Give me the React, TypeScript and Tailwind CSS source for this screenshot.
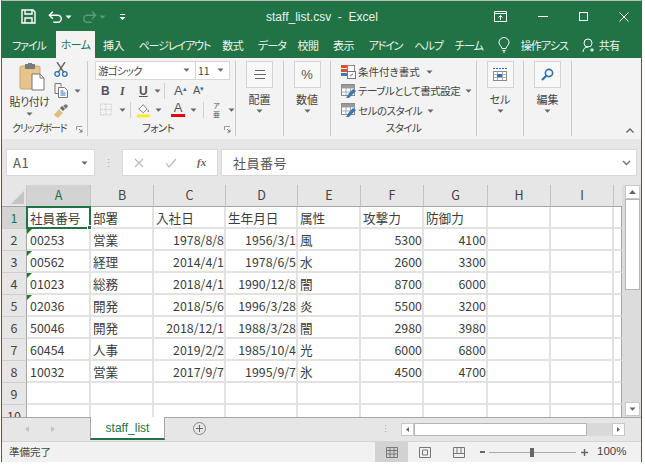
import React from "react";

const Caret = ({ c = "#666" }: { c?: string }) => (
  <svg width="7" height="4" viewBox="0 0 7 4" className="shrink-0"><path d="M0.5 0.5h6L3.5 3.8z" fill={c} /></svg>
);

const PasteIcon = () => (
  <svg width="27" height="28" viewBox="0 0 27 28">
    <rect x="1" y="3" width="20" height="23" rx="1.5" fill="#e6c48c" stroke="#c9a86e" />
    <rect x="6" y="1" width="10" height="5" fill="#7a7a7a" />
    <rect x="9" y="0" width="4" height="2" fill="#7a7a7a" />
    <path d="M13 11h8l4 4v12H13z" fill="#fff" stroke="#777" />
    <path d="M21 11v4h4" fill="none" stroke="#777" />
  </svg>
);
const CutIcon = () => (
  <svg width="14" height="15" viewBox="0 0 14 15" fill="none">
    <path d="M3 0l6.5 10M11 0L4.5 10" stroke="#666" strokeWidth="1.4" />
    <circle cx="3.2" cy="12" r="2.3" stroke="#2a6fb5" strokeWidth="1.3" />
    <circle cx="10.8" cy="12" r="2.3" stroke="#2a6fb5" strokeWidth="1.3" />
  </svg>
);
const CopyIcon = () => (
  <svg width="15" height="15" viewBox="0 0 15 15" fill="none">
    <path d="M1 .5h6v3M1 .5v10h3" stroke="#777" />
    <path d="M4.5 4.5h6l3 3v7h-9z" fill="#fff" stroke="#777" />
    <path d="M6.5 8h3M6.5 10h5M6.5 12h5" stroke="#2a6fb5" />
  </svg>
);
const BrushIcon = () => (
  <svg width="15" height="14" viewBox="0 0 15 14">
    <path d="M0 11l5-6 4 4-5 5z" fill="#e0bd80" />
    <path d="M6 4l2-2 3 3-2 2z" fill="#666" />
    <path d="M9 2l3-2 2 2-2 3z" fill="#777" />
  </svg>
);
const Launcher = () => (
  <svg width="7" height="7" viewBox="0 0 7 7" fill="none">
    <path d="M.5 4V.5H6" stroke="#999" />
    <path d="M3 3l3 3M6 3.5V6H3.5" stroke="#777" />
  </svg>
);
const Vsep = () => <div className="w-px h-[16px] bg-[#cfcfcf] mx-[3px]" />;

const BigGroup = ({ label, icon, w }: { label: string; icon: React.ReactNode; w: string }) => (
  <div className={`${w} shrink-0 flex flex-col items-center border-r border-[#c8c8c8] my-[3px] h-[75px]`}>
    <div className="w-[27px] h-[27px] border border-[#d4d4d4] bg-[#f8f8f8] flex items-center justify-center">{icon}</div>
    <div className="text-[11px] leading-[14px] mt-[4px] text-[#444]">{label}</div>
    <div className="mt-[3px]"><Caret /></div>
  </div>
);

const StyleIcon1 = () => (
  <svg width="15" height="14" viewBox="0 0 15 14">
    <rect x="0" y="0" width="6" height="3" fill="#d9502e" />
    <rect x="0" y="4" width="6" height="3" fill="#d9502e" />
    <rect x="0" y="8" width="6" height="3" fill="#3a7ab8" />
    <rect x="6.5" y=".5" width="7" height="6" fill="#fff" stroke="#888" />
    <rect x="6.5" y="6.5" width="8" height="7" fill="#fff" stroke="#777" />
    <path d="M9 11l3-2" stroke="#666" />
  </svg>
);
const StyleIcon2 = () => (
  <svg width="16" height="15" viewBox="0 0 16 15">
    <rect x=".5" y=".5" width="13" height="11" fill="#fff" stroke="#888" />
    <path d="M.5 4h13M.5 8h13M5 .5v11M9.5 .5v11" stroke="#a9a9a9" />
    <rect x="1" y="1" width="12.5" height="3" fill="#9a9a9a" />
    <path d="M5 14l3-5 4-4 3 2-4 4-3 3z" fill="#3a7ab8" />
  </svg>
);

const CellsIcon = () => (
  <svg width="16" height="15" viewBox="0 0 16 15">
    <path d="M1 1.5h14" stroke="#2a6fb5" strokeDasharray="2 1" />
    <rect x="1.5" y="4.5" width="13" height="9" fill="#fff" stroke="#888" />
    <path d="M1.5 7.5h13M1.5 10.5h13M5.5 4.5v9M10.5 4.5v9" stroke="#aaa" />
    <rect x="5" y="7" width="5" height="3" fill="#2a6fb5" />
  </svg>
);
const SearchIcon = () => (
  <svg width="13" height="13" viewBox="0 0 13 13" fill="none">
    <circle cx="8" cy="5" r="3.6" stroke="#2a6fb5" strokeWidth="1.6" />
    <path d="M5.3 7.7L1 12" stroke="#2a6fb5" strokeWidth="2" />
  </svg>
);

const tabs = [
  { t: "挿入", c: "w-[21px] tracking-[-0.4px]" },
  { t: "ページレイアウト", c: "w-[69px] tracking-[-1.1px]" },
  { t: "数式", c: "w-[21px] tracking-[-0.4px]" },
  { t: "データ", c: "w-[25px] tracking-[-0.8px]" },
  { t: "校閲", c: "w-[21px] tracking-[-0.4px]" },
  { t: "表示", c: "w-[21px] tracking-[-0.4px]" },
  { t: "アドイン", c: "w-[31px] tracking-[-1.2px]" },
  { t: "ヘルプ", c: "w-[26px] tracking-[-0.8px]" },
  { t: "チーム", c: "w-[26px] tracking-[-0.8px]" },
];

const cols = ["A", "B", "C", "D", "E", "F", "G", "H", "I"];
const rows: string[][] = [
  ["社員番号", "部署", "入社日", "生年月日", "属性", "攻撃力", "防御力"],
  ["00253", "営業", "1978/8/8", "1956/3/1", "風", "5300", "4100"],
  ["00562", "経理", "2014/4/1", "1978/6/5", "水", "2600", "3300"],
  ["01023", "総務", "2018/4/1", "1990/12/8", "闇", "8700", "6000"],
  ["02036", "開発", "2018/5/6", "1996/3/28", "炎", "5500", "3200"],
  ["50046", "開発", "2018/12/1", "1988/3/28", "闇", "2980", "3980"],
  ["60454", "人事", "2019/2/2", "1985/10/4", "光", "6000", "6800"],
  ["10032", "営業", "2017/9/7", "1995/9/7", "氷", "4500", "4700"],
];

const Cell = ({ r, c, text }: { r: number; c: number; text: string }) => {
  const right = r > 0 && (c === 2 || c === 3 || c === 5 || c === 6);
  const mono = /^[0-9/]+$/.test(text);
  const sel = r === 0 && c === 0;
  return (
    <div
      className={`relative h-[22px] border-r-2 border-b-2 border-[#e2e2e2] flex items-center pt-[2px] whitespace-nowrap text-[#3c3c3c] ${
        right ? "justify-end" : "justify-start"
      } ${c === 0 ? "pl-[3px]" : "pl-[2px]"} ${mono ? "text-[12.4px]" : "text-[12.6px]"}`}
    >
      {text}
      {c === 0 && r >= 1 && r <= 4 && (
        <span className="absolute left-0 top-0 w-0 h-0 border-t-[5px] border-r-[5px] border-t-[#1f7a1f] border-r-transparent" />
      )}
      {sel && (
        <span className="absolute -left-px -top-px -right-[2px] -bottom-[2px] border-2 border-[#217346] z-10">
          <span className="absolute -right-[3px] -bottom-[3px] w-[5px] h-[5px] bg-[#217346] border border-white" />
        </span>
      )}
    </div>
  );
};

export default function App() {
  return (
    <div className="w-[645px] h-[466px] bg-white font-['Noto_Sans_CJK_JP','Liberation_Sans',sans-serif] [font-feature-settings:'palt'] overflow-hidden">
      <div className="ml-[1px] w-[641px] h-[462px] border-t border-t-[#bdbdbd] border-x border-x-[#217346] bg-[#e6e6e6] flex flex-col overflow-hidden">
        {/* Title bar */}
        <div className="h-[31px] shrink-0 bg-[#217346] flex items-center text-white">
          <div className="w-[264px] flex items-center pl-[19px] gap-[2px]">
            <svg width="15" height="15" viewBox="0 0 15 15" fill="none" stroke="#fff" strokeWidth="1.4">
              <path d="M1 1h11l2 2v11H1z" />
              <path d="M4 1v4h7V1M4 14V9h7v5" />
            </svg>
            <svg className="ml-[10px]" width="15" height="13" viewBox="0 0 17 14" fill="none" stroke="#fff" strokeWidth="1.6">
              <path d="M1.5 5.5H11a4 4 0 0 1 0 8H6" />
              <path d="M5.5 1.5l-4 4 4 4" />
            </svg>
            <Caret c="#fff" />
            <svg className="ml-[8px]" width="15" height="13" viewBox="0 0 17 14" fill="none" stroke="#5b9a7b" strokeWidth="1.6">
              <path d="M15.5 5.5H6a4 4 0 0 0 0 8h5" />
              <path d="M11.5 1.5l4 4-4 4" />
            </svg>
            <Caret c="#5b9a7b" />
            <svg className="ml-[11px]" width="7" height="6" viewBox="0 0 7 6"><path d="M1 0h5v1H1zM0.5 3h6L3.5 6z" fill="#fff" /></svg>
          </div>
          <div className="flex-1 text-[12px] text-[#e8f2ed] whitespace-pre font-['Liberation_Sans',sans-serif]">staff_list.csv  -  Excel</div>
          <div className="flex items-center pr-[12px] gap-[31px]">
            <svg width="13" height="11" viewBox="0 0 13 11" fill="none" stroke="#fff"><path d="M.5.5h12v10H.5zM.5 2.5h12M6.5 9V4.5M4.5 6.5l2-2 2 2" /></svg>
            <div className="w-[10px] h-px bg-white" />
            <div className="w-[9px] h-[9px] border border-white" />
            <svg width="10" height="10" viewBox="0 0 10 10" stroke="#fff"><path d="M.5.5l9 9M9.5.5l-9 9" /></svg>
          </div>
        </div>
        {/* Tabs */}
        <div className="h-[26px] shrink-0 bg-[#217346] flex items-center text-[11px] text-[#eef5f1] pl-[10px] whitespace-nowrap">
          <span className="w-[44px] tracking-[-1.1px]">ファイル</span>
          <div className="w-[39px] h-[27px] -mt-[1px] bg-[#f3f3f3] text-[#217346] flex items-center justify-center tracking-[-0.6px]">ホーム</div>
          <div className="flex items-center gap-[14.6px] ml-[8px]">
            {tabs.map((t) => (<span key={t.t} className={t.c}>{t.t}</span>))}
          </div>
          <svg className="ml-[17px] shrink-0" width="12" height="16" viewBox="0 0 12 16" fill="none" stroke="#fff"><path d="M4 11.5C3.5 9 1 8 1 5.5a5 5 0 0 1 10 0C11 8 8.5 9 8 11.5zM4.500 13.500h3M5 15h2" /></svg>
          <span className="ml-[11px] w-[45px] shrink-0 tracking-[-0.9px]">操作アシス</span>
          <svg className="ml-[16px] shrink-0" width="14" height="15" viewBox="0 0 14 15" fill="none" stroke="#fff"><circle cx="6" cy="5" r="4" /><path d="M1 14c0-3 2-5 5-5M10 10v4M8 12h4" /></svg>
          <span className="ml-[3px] tracking-[-0.4px]">共有</span>
        </div>
        {/* Ribbon */}
        <div className="h-[81px] shrink-0 bg-[#f3f3f3] flex text-[#444] whitespace-nowrap">
          {/* Clipboard */}
          <div className="w-[86px] shrink-0 my-[3px] h-[75px] border-r border-[#c8c8c8] flex flex-col">
            <div className="flex h-[57px]">
              <div className="w-[46px] pl-[9px] flex flex-col items-center">
                <div className="ml-[5px] mt-[2px] h-[28px]"><PasteIcon /></div>
                <div className="text-[11px] leading-[14px] mt-[3px] tracking-[-0.5px]">貼り付け</div>
                <div className="mt-[4px]"><Caret /></div>
              </div>
              <div className="flex flex-col pl-[6px] pt-[1px] gap-[6px]">
                <CutIcon />
                <div className="flex items-center gap-[5px]"><CopyIcon /><Caret /></div>
                <BrushIcon />
              </div>
            </div>
            <div className="h-[18px] relative flex items-center pl-[10px] text-[10px] tracking-[-1px]">
              クリップボード
              <span className="absolute right-[4px] bottom-[3px]"><Launcher /></span>
            </div>
          </div>
          {/* Font */}
          <div className="w-[148px] shrink-0 my-[3px] h-[75px] border-r border-[#c8c8c8] flex flex-col pl-[7px]">
            <div className="flex h-[20px] bg-white w-[135px] border border-[#d8d8d8] text-[10.5px]">
              <div className="w-[100px] flex items-center justify-between px-[2px] pr-[5px] border-r border-[#d8d8d8] tracking-[-0.8px]">游ゴシック<Caret /></div>
              <div className="flex-1 flex items-center justify-between px-[2px] pr-[5px]">11<Caret /></div>
            </div>
            <div className="flex items-center h-[20px] mt-[1px] pl-[6px] text-[12px] text-[#555]">
              <b className="w-[19px] font-['Liberation_Sans',sans-serif]">B</b>
              <i className="w-[19px] font-['Liberation_Serif',serif] font-bold">I</i>
              <span className="w-[15px] underline font-semibold font-['Liberation_Sans',sans-serif]">U</span>
              <Caret />
              <Vsep />
              <span className="ml-[6px] w-[19px] font-['Liberation_Sans',sans-serif] text-[13px]">A<sup className="text-[7px] text-[#2a6fb5]">▴</sup></span>
              <span className="w-[18px] font-['Liberation_Sans',sans-serif] text-[11px]">A<sup className="text-[7px] text-[#2a6fb5]">▾</sup></span>
            </div>
            <div className="flex items-center h-[20px] pl-[5px] text-[#555]">
              <svg width="13" height="13" viewBox="0 0 13 13" fill="none" stroke="#bbb" strokeDasharray="1 1"><path d="M.5.5h12v12H.5zM.5 6.5h12M6.5.5v12" /></svg>
              <span className="ml-[7px]"><Caret /></span>
              <span className="ml-[1px]"><Vsep /></span>
              <svg className="ml-[3px]" width="15" height="16" viewBox="0 0 15 16">
                <path d="M2 7l5-5 4 5-4 4z" fill="#fff" stroke="#777" />
                <path d="M12 7c1 1.500 2 3 0 3.500z" fill="#2a6fb5" />
                <rect x="0" y="13" width="14" height="3" fill="#ffee00" />
              </svg>
              <span className="ml-[5px]"><Caret /></span>
              <div className="ml-[9px] w-[14px] flex flex-col items-center leading-[12px] text-[13px] font-['Liberation_Sans',sans-serif]">
                A<div className="w-[14px] h-[3px] bg-[#e8000b]" />
              </div>
              <span className="ml-[5px]"><Caret /></span>
              <span className="ml-[3px]"><Vsep /></span>
              <div className="ml-[4px] w-[12px] flex flex-col items-center text-[7px] leading-[9px]"><span>ア</span><span>亜</span></div>
              <span className="ml-[6px]"><Caret /></span>
            </div>
            <div className="flex-1 relative flex items-center justify-center text-[10.5px] pr-[14px] pt-[1px] tracking-[-0.6px]">
              フォント
              <span className="absolute right-[4px] bottom-[3px]"><Launcher /></span>
            </div>
          </div>
          <BigGroup w="w-[48px]" label="配置" icon={<svg width="12" height="10" viewBox="0 0 12 10" stroke="#666"><path d="M1 .5h10M0 4.500h12M1 8.500h10" /></svg>} />
          <BigGroup w="w-[47px]" label="数値" icon={<span className="text-[13px] font-['Liberation_Sans',sans-serif] text-[#555]">%</span>} />
          {/* Styles */}
          <div className="w-[146px] shrink-0 my-[3px] h-[75px] border-r border-[#c8c8c8] flex flex-col pl-[10px] text-[10.5px]">
            <div className="flex items-center gap-[2px] h-[21px] mt-[1px]"><StyleIcon1 /><span className="mr-[4px]">条件付き書式</span><Caret /></div>
            <div className="flex items-center gap-[1px] h-[21px]"><StyleIcon2 /><span className="mr-[4px] tracking-[-0.5px]">テーブルとして書式設定</span><Caret /></div>
            <div className="flex items-center gap-[1px] h-[21px]"><StyleIcon2 /><span className="mr-[4px] tracking-[-0.5px]">セルのスタイル</span><Caret /></div>
            <div className="flex-1 flex items-center justify-center pr-[10px] tracking-[-0.6px]">スタイル</div>
          </div>
          <BigGroup w="w-[47px]" label="セル" icon={<CellsIcon />} />
          <BigGroup w="w-[48px]" label="編集" icon={<SearchIcon />} />
          <div className="flex-1 flex items-end justify-end pr-[7px] pb-[6px]">
            <svg width="8" height="5" viewBox="0 0 8 5" fill="none" stroke="#666" strokeWidth="1.4"><path d="M.5 4.500L4 1l3.500 3.500" /></svg>
          </div>
        </div>
        {/* Formula bar */}
        <div className="h-[46px] shrink-0 pt-[10px] pb-[9px] pl-[4px] pr-[4px] flex items-stretch text-[#555]">
          <div className="w-[89px] bg-white border border-[#d8d8d8] flex items-center justify-between pl-[6px] pr-[6px] text-[13px] tracking-[0.5px]">A1<Caret /></div>
          <div className="w-[27px] flex items-center justify-center text-[#aaa] text-[11px]">⋮</div>
          <div className="w-[96px] bg-white border border-[#d8d8d8] flex items-center pl-[11px]">
            <svg width="10" height="10" viewBox="0 0 10 10" stroke="#bbb" strokeWidth="1.2"><path d="M1 1l8 8M9 1L1 9" /></svg>
            <svg className="ml-[21px]" width="12" height="10" viewBox="0 0 12 10" fill="none" stroke="#bbb" strokeWidth="1.2"><path d="M1 5l3 4 7-8" /></svg>
            <span className="ml-[20px] italic text-[11px] font-['Liberation_Serif',serif] font-bold text-[#666]">fx</span>
          </div>
          <div className="flex-1 ml-[3px] bg-white border border-[#d8d8d8] flex items-center justify-between pl-[11px] pr-[5px] text-[13px] tracking-[0.5px]">
            <span>社員番号</span>
            <svg width="9" height="6" viewBox="0 0 9 6" fill="none" stroke="#777" strokeWidth="1.5"><path d="M1 1l3.500 3.500L8 1" /></svg>
          </div>
        </div>
        {/* Sheet */}
        <div className="h-[232px] shrink-0 flex">
          <div className="flex-1 overflow-hidden bg-white grid content-start grid-cols-[25px_64px_63px_72px_72px_63px_63px_64px_63px_63px_8px] grid-rows-[22px_repeat(10,22px)]">
            <div className="bg-[#e6e6e6] border-b border-[#a6a6a6] border-r border-r-[#c6c6c6] flex items-end justify-end pr-[2px] pb-[2px]">
              <div className="w-0 h-0 border-b-[13px] border-l-[13px] border-b-[#c4c4c4] border-l-transparent" />
            </div>
            {cols.map((c, i) => (
              <div key={c} className={`border-b border-b-[#a6a6a6] border-r border-r-[#c2c2c2] flex items-center justify-center text-[12.5px] ${i === 0 ? "bg-[#d3d3d3] text-[#217346]" : "bg-[#e6e6e6] text-[#444]"}`}>{c}</div>
            ))}
            <div className="bg-[#e6e6e6] border-b border-b-[#a6a6a6]" />
            {Array.from({ length: 10 }).map((_, r) => (
              <React.Fragment key={r}>
                <div className={`h-[22px] border-b border-b-[#cfcfcf] border-r border-r-[#a6a6a6] flex items-center justify-center pt-[1px] text-[12.5px] ${r === 0 ? "bg-[#d3d3d3] text-[#217346]" : "bg-[#e6e6e6] text-[#444]"}`}>{r + 1}</div>
                {cols.map((_, c) => (
                  <Cell key={c} r={r} c={c} text={rows[r]?.[c] ?? ""} />
                ))}
                <div className="h-[22px] border-b-2 border-[#e2e2e2] border-r border-r-[#a6a6a6]" />
              </React.Fragment>
            ))}
          </div>
          {/* vertical scrollbar */}
          <div className="w-[19px] shrink-0 bg-[#dcdcdc] flex flex-col pl-[3px] pr-[1px]">
            <div className="h-[14px] bg-white border border-[#c8c8c8] flex items-center justify-center"><svg width="7" height="4" viewBox="0 0 7 4"><path d="M3.500 0L7 4H0z" fill="#666" /></svg></div>
            <div className="h-[91px] bg-white border border-[#b5b5b5]" />
            <div className="flex-1" />
            <div className="h-[14px] mb-[1px] bg-white border border-[#c8c8c8] flex items-center justify-center"><Caret /></div>
          </div>
        </div>
        {/* Sheet tab bar */}
        <div className="h-[24px] shrink-0 bg-[#e6e6e6] flex items-start border-t border-t-[#a6a6a6] relative">
          <div className="w-[88px] h-[22px] flex items-center pl-[23px] gap-[22px]">
            <svg width="4" height="6" viewBox="0 0 4 6"><path d="M4 0v6L0 3z" fill="#c4c4c4" /></svg>
            <svg width="4" height="6" viewBox="0 0 4 6"><path d="M0 0v6l4-3z" fill="#c4c4c4" /></svg>
          </div>
          <div className="w-[75px] h-[23px] -mt-px bg-white border-x border-[#a6a6a6] border-b-2 border-b-[#217346] flex items-center justify-center text-[12px] text-[#217346] font-['Liberation_Sans',sans-serif]">staff_list</div>
          <div className="ml-[28px] mt-[4px] w-[13px] h-[13px] rounded-full border border-[#888] flex items-center justify-center">
            <svg width="7" height="7" viewBox="0 0 7 7" stroke="#666"><path d="M3.500 0v7M0 3.500h7" /></svg>
          </div>
          <div className="ml-[175px] mt-[5px] text-[#aaa] text-[9px] leading-[12px]">⋮</div>
          <div className="ml-[11px] mt-[5px] w-[224px] h-[13px] flex bg-[#d9d9d9]">
            <div className="w-[13px] bg-white border border-[#c8c8c8] flex items-center justify-center"><svg width="3" height="5" viewBox="0 0 3 5"><path d="M3 0v5L0 2.500z" fill="#666" /></svg></div>
            <div className="w-[173px] bg-white border border-[#b5b5b5]" />
            <div className="flex-1" />
            <div className="w-[13px] bg-white border border-[#c8c8c8] flex items-center justify-center"><svg width="3" height="5" viewBox="0 0 3 5"><path d="M0 0v5l3-2.500z" fill="#666" /></svg></div>
          </div>
        </div>
        {/* Status bar */}
        <div className="flex-1 bg-[#f1f1f1] border-t border-t-[#d4d4d4] flex items-center text-[10.5px] text-[#444]">
          <span className="ml-[7px] w-[366px]">準備完了</span>
          <div className="w-[33px] h-full bg-[#d2d2d2] flex items-center justify-center">
            <svg width="12" height="11" viewBox="0 0 12 11" fill="none" stroke="#777"><path d="M.5.5h11v10H.5zM.5 3.500h11M.5 7h11M4 .5v10M8 .5v10" /></svg>
          </div>
          <div className="w-[34px] flex justify-center">
            <svg width="12" height="11" viewBox="0 0 12 11" fill="none" stroke="#777"><path d="M.5.5h11v10H.5zM3.500 3h5v5h-5z" /></svg>
          </div>
          <div className="w-[33px] flex justify-center">
            <svg width="12" height="11" viewBox="0 0 12 11" fill="none" stroke="#777"><path d="M.5.5h11v10H.5zM.5 6.500h11M4 .5v6M8 .5v6" /></svg>
          </div>
          <div className="ml-[5px] w-[5px] h-[2px] bg-[#666]" />
          <div className="ml-[4px] w-[87px] h-px bg-[#aaa] relative">
            <span className="absolute left-[41px] -top-[4px] w-[4px] h-[9px] bg-[#666]" />
          </div>
          <svg className="ml-[5px]" width="7" height="7" viewBox="0 0 7 7" stroke="#666" strokeWidth="1.4"><path d="M3.500 0v7M0 3.500h7" /></svg>
          <span className="ml-[9px] text-[11.5px] font-['Liberation_Sans',sans-serif]">100%</span>
        </div>
      </div>
    </div>
  );
}
